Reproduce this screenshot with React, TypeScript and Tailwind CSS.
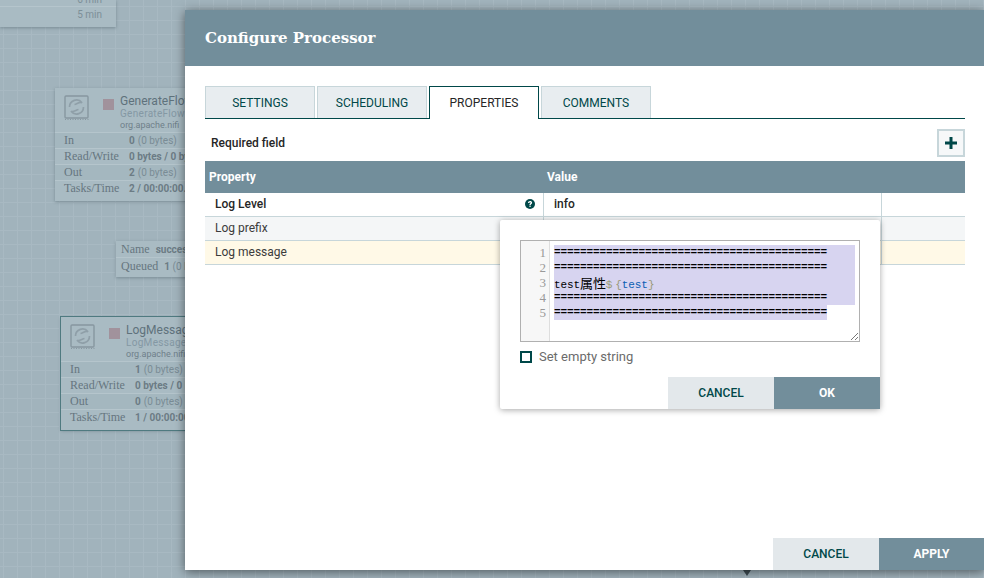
const roboto = "font-['Roboto',sans-serif]";
const slab = "font-['Liberation_Serif',serif]";

function ProcessorIcon() {
  return (
    <svg width="26" height="26" viewBox="0 0 26 26" fill="none" className="shrink-0">
      <rect x="1" y="1" width="23" height="22" rx="1" stroke="#8797a0" strokeWidth="1.4" />
      <path d="M1 24.500h24" stroke="#8797a0" strokeWidth="1.2" strokeDasharray="1 1.500" />
      <path d="M5.500 12A7 7 0 0 1 18 7.700C15.500 6.500 13 9 10.500 9.500" stroke="#8f9fa8" strokeWidth="1.7" />
      <path d="M19.500 12A7 7 0 0 1 7 16.300C9.500 17.500 12 15 14.500 14.500" stroke="#8f9fa8" strokeWidth="1.7" />
    </svg>
  );
}

type Stat = { label: string; value: string; rest: string };

function ProcessorCard({
  name,
  type,
  stats,
  className,
}: {
  name: string;
  type: string;
  stats: Stat[];
  className: string;
}) {
  return (
    <div className={`absolute w-[260px] pb-[5px] bg-[#a9bbc3] shadow-[0_1px_3px_rgba(60,80,90,0.4)] ${className}`}>
      <div className="h-[44px] flex pl-[9px] pt-[7px]">
        <ProcessorIcon />
        <span className="w-[11px] h-[11px] bg-[#a1929c] ml-[13px] mt-[4px]" />
        <div className="ml-[6px] -mt-[1px]">
          <div className={`${roboto} text-[12px] leading-[14px] text-[#5f727c]`}>{name}</div>
          <div className={`${roboto} text-[10px] leading-[12px] tracking-[0.3px] text-[#8498a4]`}>{type}</div>
          <div className={`${roboto} text-[9px] leading-[11px] text-[#6f808a]`}>org.apache.nifi</div>
        </div>
      </div>
      {stats.map((s, i) => (
        <div
          key={s.label}
          className={`h-[16px] flex items-center pl-[9px] text-[10px] border-t border-[#b5c5cc] ${i % 2 === 0 ? "bg-[#a4b7bf]" : ""}`}
        >
          <span className={`w-[65px] -mt-[2px] ${slab} text-[12px] text-[#66767f] whitespace-nowrap`}>{s.label}</span>
          <span className={`${roboto} font-bold text-[#6c7c85] whitespace-nowrap`}>{s.value}</span>
          {s.rest && <span className={`${roboto} ml-[3px] text-[#7a8c95] whitespace-nowrap`}>{s.rest}</span>}
        </div>
      ))}
    </div>
  );
}

function Canvas() {
  return (
    <div className="absolute inset-0 overflow-hidden bg-[#a1b3bc] bg-[linear-gradient(#a8b9c2_1px,transparent_1px),linear-gradient(90deg,#a8b9c2_1px,transparent_1px)] bg-[size:14px_14px] bg-[position:3px_6px]">
      <div className="absolute left-0 top-0 w-[116px] h-[27px] bg-[#a9bbc3] shadow-[0_1px_3px_rgba(60,80,90,0.4)]">
        <div className={`${roboto} h-[7px] overflow-hidden border-b border-[#b5c5cc] text-right pr-[14px] text-[10px] leading-[0px] text-[#7d8f98]`}>
          6 min
        </div>
        <div className={`${roboto} h-[20px] text-right pr-[14px] text-[10px] leading-[16px] text-[#7d8f98]`}>5 min</div>
      </div>
      <ProcessorCard
        className="left-[55px] top-[88px]"
        name="GenerateFlowFile"
        type="GenerateFlowFile"
        stats={[
          { label: "In", value: "0", rest: "(0 bytes)" },
          { label: "Read/Write", value: "0 bytes / 0 bytes", rest: "" },
          { label: "Out", value: "2", rest: "(0 bytes)" },
          { label: "Tasks/Time", value: "2 / 00:00:00.000", rest: "" },
        ]}
      />
      <div className="absolute left-[116px] top-[241px] w-[200px] h-[36px] bg-[#a9bbc3] shadow-[0_1px_3px_rgba(60,80,90,0.4)]">
        <div className="h-[17px] flex items-center pl-[5px] gap-[6px] border-b border-[#b5c5cc]">
          <span className={`${slab} text-[12px] text-[#66767f]`}>Name</span>
          <span className={`${roboto} font-bold text-[10px] text-[#6c7c85]`}>success</span>
        </div>
        <div className="h-[17px] flex items-center pl-[5px] gap-[6px]">
          <span className={`${slab} -mt-[1px] text-[12px] text-[#66767f]`}>Queued</span>
          <span className={`${roboto} text-[10px] text-[#7a8c95]`}>
            <b className="text-[#6c7c85]">1</b> (0 bytes)
          </span>
        </div>
      </div>
      <ProcessorCard
        className="left-[61px] top-[317px] outline outline-1 outline-[#4f7a80]"
        name="LogMessage"
        type="LogMessage"
        stats={[
          { label: "In", value: "1", rest: "(0 bytes)" },
          { label: "Read/Write", value: "0 bytes / 0 bytes", rest: "" },
          { label: "Out", value: "0", rest: "(0 bytes)" },
          { label: "Tasks/Time", value: "1 / 00:00:00.000", rest: "" },
        ]}
      />
      <span className="absolute left-[743px] top-[570px] w-0 h-0 border-x-[4px] border-x-transparent border-t-[6px] border-t-[#3f4d54]" />
    </div>
  );
}

function Tab({ label, active }: { label: string; active?: boolean }) {
  return (
    <div
      className={`w-[110px] flex items-center justify-center text-[12px] ${
        active
          ? "bg-white text-[#262626] border border-[#004849] border-b-0 h-[33px] relative z-10"
          : "bg-[#e8edf0] text-[#004849] border border-[#c7d6da] border-b-0 h-[32px]"
      }`}
    >
      {label}
    </div>
  );
}

function Row({ name, bold, className, icon }: { name: string; bold?: boolean; className: string; icon?: boolean }) {
  return (
    <div className={`h-[24px] flex border-b border-[#c7d6da] text-[12px] ${className}`}>
      <div className="w-[339px] flex items-center justify-between pl-[10px] pr-[8px] pb-[1px] border-r border-[#c7d6da]">
        <span className={bold ? "font-medium text-[#262626]" : "text-[#3c3c3c]"}>{name}</span>
        {icon && (
          <svg width="10" height="10" viewBox="0 0 10 10">
            <circle cx="5" cy="5" r="5" fill="#004849" />
            <path d="M3 3.900c0-1.200 1-1.900 2.100-1.900S7.100 2.700 7.100 3.700c0 1.300-1.400 1.300-1.400 2.400H4.400c0-1.700 1.300-1.700 1.300-2.300 0-.3-.3-.5-.7-.5s-.7.300-.7.700z" fill="#fff" />
            <rect x="4.400" y="6.600" width="1.300" height="1.300" fill="#fff" />
          </svg>
        )}
      </div>
      <div className="w-[338px] flex items-center pl-[10px] pb-[1px] border-r border-[#c7d6da]">
        {bold && <span className="font-medium text-[#262626]">info</span>}
      </div>
    </div>
  );
}

const bar = <span className="font-bold">==========================================</span>;

function Editor() {
  const lines: React.ReactNode[] = [
    bar,
    bar,
    <>
      test<span className="text-[13px] font-['Noto_Sans_CJK_SC',sans-serif]">属性</span>
      <span className="text-[#999977]">$</span>
      <span className="text-[#999977] ml-[3px]">{"{"}</span>
      <span className="text-[#0b5fb3]">test</span>
      <span className="text-[#999977]">{"}"}</span>
    </>,
    bar,
    bar,
  ];
  return (
    <div className="h-[102px] border border-[#b0b0b0] flex relative">
      <div className="w-[29px] shrink-0 bg-[#f7f7f7] border-r border-[#dedede] pt-[4px] pr-[3px] text-right font-['Liberation_Serif',serif] text-[13px] leading-[15px] text-[#999]">
        {lines.map((_, i) => (
          <div key={i} className="h-[15px]">
            {i + 1}
          </div>
        ))}
      </div>
      <div className="flex-1 pl-[4px] pr-[4px] pt-[4px] font-['Liberation_Mono',monospace] text-[11px] leading-[15px] text-black">
        {lines.map((line, i) => (
          <div key={i} className={`h-[15px] whitespace-nowrap bg-[#d7d4f0] ${i === 4 ? "w-[273px]" : "w-full"}`}>
            <span className="tracking-[-0.1px]">{line}</span>
          </div>
        ))}
      </div>
      <svg className="absolute right-[1px] bottom-[1px]" width="8" height="8" viewBox="0 0 8 8" stroke="#555" strokeWidth="0.8">
        <path d="M1 8L8 1M5 8l3-3" />
      </svg>
    </div>
  );
}

function Popup() {
  return (
    <div className="absolute left-[315px] top-[154px] w-[380px] h-[189px] bg-white rounded-[2px] shadow-[0_1px_6px_rgba(0,0,0,0.35)] flex flex-col z-20">
      <div className="px-[20px] pt-[20px]">
        <Editor />
        <div className="flex items-center mt-[8px] h-[14px]">
          <span className="w-[12px] h-[12px] border-2 border-[#004849]" />
          <span className="ml-[7px] text-[13px] text-[#6b6b6b]">Set empty string</span>
        </div>
      </div>
      <div className="mt-auto flex justify-end">
        <button className="w-[106px] h-[32px] bg-[#e3e8eb] text-[#004849] text-[12px] font-medium">CANCEL</button>
        <button className="w-[106px] h-[32px] bg-[#728e9b] text-white text-[12px] font-bold">OK</button>
      </div>
    </div>
  );
}

export default function App() {
  return (
    <div className={`relative w-[984px] h-[578px] overflow-hidden ${roboto}`}>
      <Canvas />
      <div className="absolute left-[185px] top-[10px] w-[799px] h-[560px] bg-white shadow-[0_2px_10px_rgba(0,0,0,0.5)] flex flex-col">
        <div className="h-[56px] shrink-0 bg-[#728e9b] flex items-center pl-[20px] pt-[1px] font-['DejaVu_Serif',serif] text-[15px] font-bold text-white">
          Configure Processor
        </div>
        <div className="relative flex-1 flex flex-col pl-[20px] pr-[19px]">
          <div className="mt-[20px] flex items-start gap-[2px] border-b border-[#004849] h-[33px]">
            <Tab label="SETTINGS" />
            <Tab label="SCHEDULING" />
            <Tab label="PROPERTIES" active />
            <Tab label="COMMENTS" />
          </div>
          <div className="h-[42px] pt-[6px] flex items-center justify-between">
            <span className="pl-[6px] text-[12px] font-medium text-[#262626]">Required field</span>
            <span className="w-[28px] h-[28px] bg-[#f6f8f9] border-2 border-[#c7d6da] flex items-center justify-center">
              <svg width="14" height="14" viewBox="0 0 14 14">
                <path d="M5.500 1h3v4.500H13v3H8.500V13h-3V8.500H1v-3h4.500z" fill="#004849" />
              </svg>
            </span>
          </div>
          <div className="h-[32px] shrink-0 bg-[#728e9b] flex items-center text-[12px] font-bold text-white">
            <span className="w-[342px] pl-[4px]">Property</span>
            <span>Value</span>
          </div>
          <Row name="Log Level" bold icon className="bg-white" />
          <Row name="Log prefix" className="bg-[#f4f6f7]" />
          <Row name="Log message" className="bg-[#fff9e7]" />
          <Popup />
          <div className="mt-auto flex justify-end -mr-[19px]">
            <button className="w-[106px] h-[32px] bg-[#e3e8eb] text-[#004849] text-[12px] font-medium">CANCEL</button>
            <button className="w-[105px] h-[32px] bg-[#728e9b] text-white text-[12px] font-bold">APPLY</button>
          </div>
        </div>
      </div>
    </div>
  );
}
